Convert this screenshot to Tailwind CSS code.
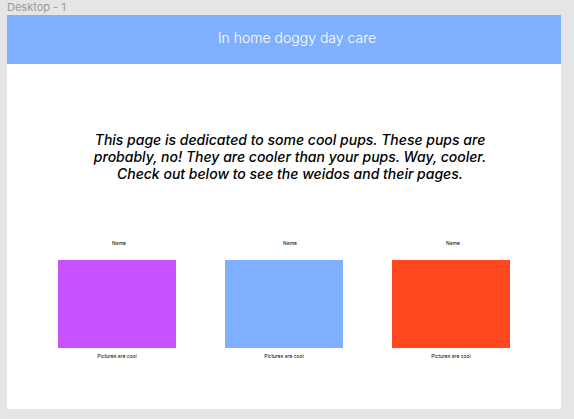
<!DOCTYPE html>
<html lang="en">
<head>
<meta charset="utf-8">
<meta name="viewport" content="width=device-width, initial-scale=1">
<title>In home doggy day care</title>
<script src="https://cdn.jsdelivr.net/npm/@tailwindcss/browser@4"></script>
</head>
<body class="flex min-h-screen flex-col bg-[#e5e5e5] pr-[13px] pb-[10px] pl-[7px] font-['Inter',sans-serif] text-black">
  <div class="h-[15px] text-[11px] leading-[15px] text-[#999999]">Desktop - 1</div>
  <div class="flex flex-1 flex-col bg-white">
    <header class="bg-[#7fafff] pt-[14px] pb-[17px] pl-[26px] text-center">
      <h1 class="text-[14px] leading-[18px] font-light text-white">In home doggy day care</h1>
    </header>
    <main class="pt-[67px]">
      <p class="pl-[12px] text-center text-[14px] leading-[17px] font-medium italic">This page is dedicated to some cool pups. These pups are<br>probably, no! They are cooler than your pups. Way, cooler.<br>Check out below to see the weidos and their pages.</p>
      <div class="grid grid-cols-3 gap-[49px] px-[51px] pt-[57px] text-center">
        <section>
          <h2 class="pl-[4px] text-[5px] leading-[8px]">Name</h2>
          <div class="mt-[13px] aspect-[118/88] bg-[#c653ff]"></div>
          <p class="mt-[4px] text-[5px] leading-[8px]">Pictures are cool</p>
        </section>
        <section>
          <h2 class="pl-[12px] text-[5px] leading-[8px]">Name</h2>
          <div class="mt-[13px] aspect-[118/88] bg-[#7fafff]"></div>
          <p class="mt-[4px] text-[5px] leading-[8px]">Pictures are cool</p>
        </section>
        <section>
          <h2 class="pl-[4px] text-[5px] leading-[8px]">Name</h2>
          <div class="mt-[13px] aspect-[118/88] bg-[#ff4820]"></div>
          <p class="mt-[4px] text-[5px] leading-[8px]">Pictures are cool</p>
        </section>
      </div>
    </main>
  </div>
</body>
</html>
